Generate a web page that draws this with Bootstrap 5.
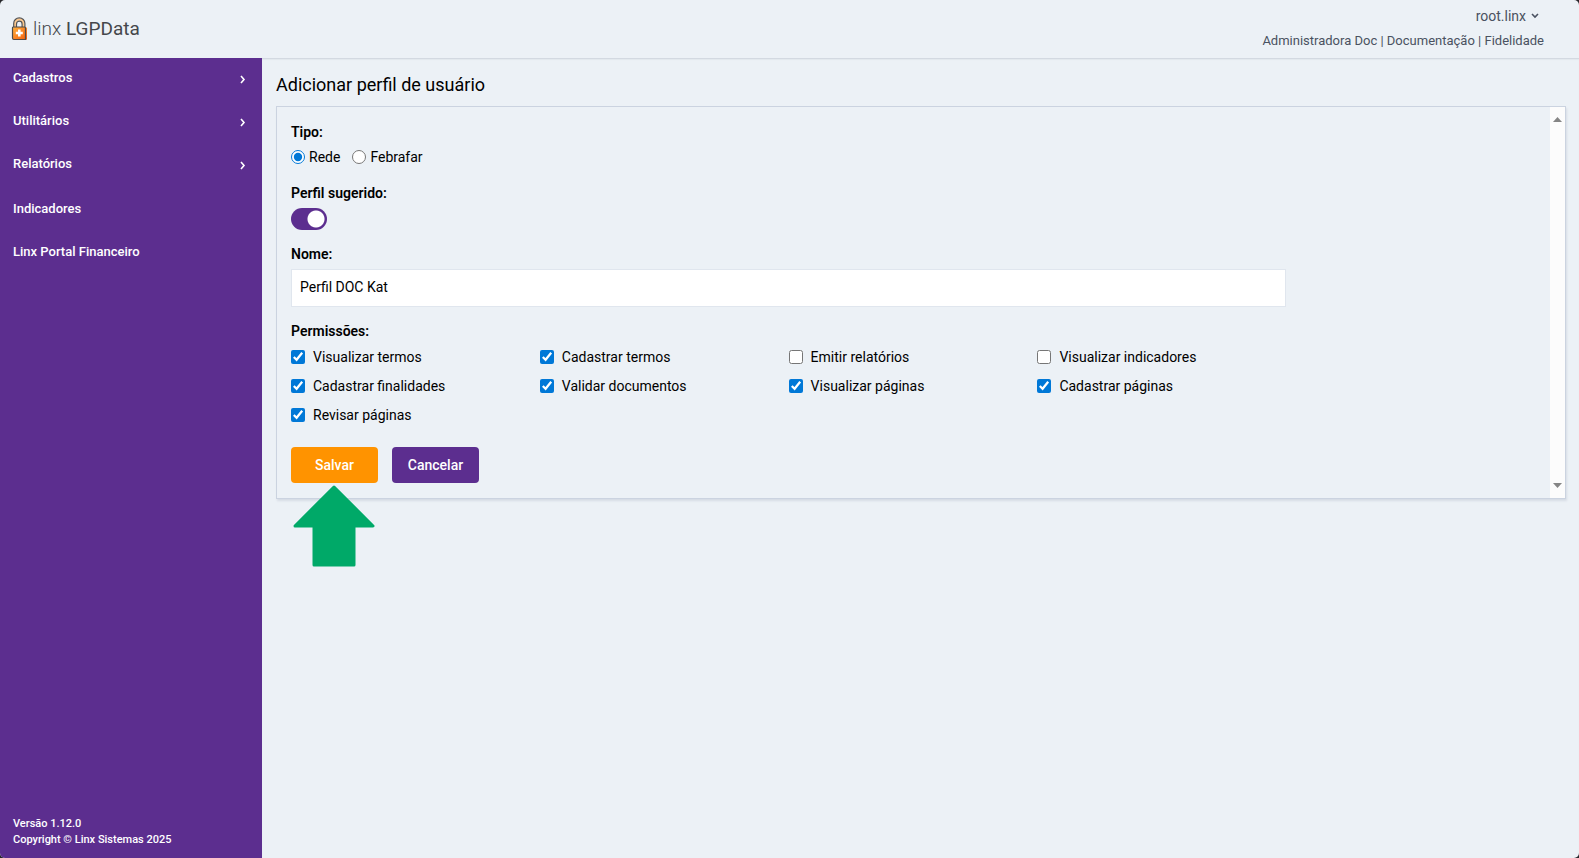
<!DOCTYPE html>
<html lang="pt-BR">
<head>
<meta charset="utf-8">
<meta name="viewport" content="width=device-width, initial-scale=1">
<title>Linx LGPData - Perfil de usuário</title>
<link href="https://cdn.jsdelivr.net/npm/bootstrap@5.3.0/dist/css/bootstrap.min.css" rel="stylesheet">
<style>
  :root { --purple: #5c2e8f; --surface: #ecf1f6; --orange: #ff9300; --line: #cbd3e0; }
  body { background: #26262a; color: #000; font-family: Roboto, "Liberation Sans", sans-serif; font-size: 14px; line-height: 20px; }
  a { color: inherit; text-decoration: none; }
  .app { background: var(--surface); border-radius: 5px; overflow: hidden; }
  .topbar { height: 58px; padding: 0 35px 0 11px; color: #4a5261; }
  .brand { color: #45474b; font-size: 19px; gap: 5px; }
  .brand .thin { font-weight: 300; }
  .account { padding-top: 6px; }
  .user-btn { font-size: 14px; line-height: 20px; padding: 0 5px 0 0; color: inherit; gap: 5px; }
  .unit-links { font-size: 13px; line-height: 18px; margin-top: 6px; }
  .sidebar { width: 262px; background: var(--purple); color: #fff; font-size: 13px; font-weight: 500; }
  .sidebar .nav-item a { height: 43px; padding: 11px 16px 0 13px; line-height: 18px; }
  .sidebar .nav-item svg { margin-top: 6px; }
  .sidebar .first-plain { margin-top: 2px; }
  .sidebar footer { font-size: 11px; line-height: 16px; padding: 0 13px 10px; }
  .content { padding: 14px 13px 0 14px; border-top: 1px solid #d3d9e1; box-shadow: inset 0 1px 1px #e3e8ee; }
  .page-title { font-size: 18px; line-height: 24px; margin-bottom: 9px; }
  .panel { border: 1px solid var(--line); box-shadow: 1px 2px 2px #d6dce5; }
  .panel form { padding: 15px 15px 15px 14px; }
  .track { width: 15px; background: #fcfcfc; padding: 10px 0; }
  .caption { font-size: 14px; line-height: 20px; font-weight: 600; margin: 0; float: none; }
  .tipo { margin-top: 5px; gap: 12px; }
  .pick { width: 14px; height: 14px; margin: 0; accent-color: #0078d7; flex: none; }
  .switcher { width: 36px; height: 22px; margin: 5px 0 0; appearance: none; display: block; border-radius: 11px; background: radial-gradient(circle at 25px 11px, #fff 8px, var(--purple) 9px); }
  .switcher:not(:checked) { background: radial-gradient(circle at 11px 11px, #fff 8px, #9aa0aa 9px); }
  .name-group { margin: 14px 0; }
  .name-box { width: 80%; height: 38px; border: 1px solid #e0e6ee; border-radius: 0; padding: 0 8px 2px; font-size: 14px; color: #000; margin-top: 5px; }
  .perms { padding-top: 1px; }
  .perm { width: 20%; height: 29px; }
  .actions { margin-top: 18px; gap: 14px; }
  .action { width: 87px; height: 36px; padding: 0; font-size: 14px; font-weight: 500; border: 0; border-radius: 4px; color: #fff; }
  .save { background: var(--orange); }
  .cancel { background: var(--purple); }
  .pointer { position: absolute; top: 100%; left: 2px; margin-top: 2px; pointer-events: none; }
</style>
</head>
<body>
<div class="app d-flex flex-column min-vh-100">
  <header class="topbar d-flex justify-content-between">
    <a href="#" class="brand d-flex align-items-center">
      <svg width="17" height="24" viewBox="0 0 17 24" aria-hidden="true">
        <defs><linearGradient id="lock" x1="0" y1="0" x2="1" y2="1"><stop offset="0" stop-color="#ffb13c"/><stop offset="1" stop-color="#f45a0c"/></linearGradient></defs>
        <path d="M4.200 10V6.500a4.100 4.100 0 0 1 8.200 0V10" fill="none" stroke="#fbc78c" stroke-width="2.400"/>
        <path d="M2.700 10V6.500a5.600 5.600 0 0 1 11.200 0V10M5.500 10V7a2.800 2.800 0 0 1 5.600 0V10" fill="none" stroke="#555453" stroke-width="1.200"/>
        <rect x="2" y="10" width="14" height="13" rx="1.500" fill="url(#lock)"/>
        <path d="M1.500 11V21a1.500 1.500 0 0 0 1.500 1.500H14.500V11a1 1 0 0 0-1-1H2.500a1 1 0 0 0-1 1Z" fill="none" stroke="#4e4b49" stroke-width="1.200"/>
        <path d="M8.300 12.500v7M4.800 16h7" stroke="#fff" stroke-width="2.600"/>
      </svg>
      <span><span class="thin">linx</span> LGPData</span>
    </a>
    <div class="account d-flex flex-column align-items-end">
      <button type="button" class="btn border-0 user-btn d-flex align-items-center">root.linx
        <svg width="8" height="6" viewBox="0 0 8 6" aria-hidden="true"><path d="M1 1l3 3 3-3" fill="none" stroke="currentColor" stroke-width="1.600"/></svg>
      </button>
      <a href="#" class="unit-links">Administradora Doc | Documentação | Fidelidade</a>
    </div>
  </header>
  <div class="d-flex flex-grow-1">
    <aside class="sidebar d-flex flex-column justify-content-between flex-shrink-0">
      <nav>
        <ul class="nav flex-column flex-nowrap">
          <li class="nav-item"><a href="#" class="d-flex justify-content-between align-items-start">Cadastros <svg width="6" height="9" viewBox="0 0 6 9" aria-hidden="true"><path d="M1 1l3 3.500L1 8" fill="none" stroke="#fff" stroke-width="1.600"/></svg></a></li>
          <li class="nav-item"><a href="#" class="d-flex justify-content-between align-items-start">Utilitários <svg width="6" height="9" viewBox="0 0 6 9" aria-hidden="true"><path d="M1 1l3 3.500L1 8" fill="none" stroke="#fff" stroke-width="1.600"/></svg></a></li>
          <li class="nav-item"><a href="#" class="d-flex justify-content-between align-items-start">Relatórios <svg width="6" height="9" viewBox="0 0 6 9" aria-hidden="true"><path d="M1 1l3 3.500L1 8" fill="none" stroke="#fff" stroke-width="1.600"/></svg></a></li>
          <li class="nav-item first-plain"><a href="#" class="d-block">Indicadores</a></li>
          <li class="nav-item"><a href="#" class="d-block">Linx Portal Financeiro</a></li>
        </ul>
      </nav>
      <footer>Versão 1.12.0<br>Copyright © Linx Sistemas 2025</footer>
    </aside>
    <main class="content flex-grow-1">
      <h1 class="page-title fw-normal">Adicionar perfil de usuário</h1>
      <section class="panel d-flex">
        <form class="flex-grow-1">
          <fieldset>
            <legend class="caption">Tipo:</legend>
            <div class="tipo d-flex">
              <div class="d-flex align-items-center"><input class="pick me-1" type="radio" name="tipo" id="rede" checked><label for="rede">Rede</label></div>
              <div class="d-flex align-items-center"><input class="pick me-1" type="radio" name="tipo" id="febrafar"><label for="febrafar">Febrafar</label></div>
            </div>
          </fieldset>
          <div class="mt-3">
            <label class="caption d-block" for="sugerido">Perfil sugerido:</label>
            <input class="switcher" type="checkbox" role="switch" id="sugerido" checked>
          </div>
          <div class="name-group">
            <label class="caption d-block" for="nome">Nome:</label>
            <input class="form-control name-box" type="text" id="nome" value="Perfil DOC Kat">
          </div>
          <fieldset>
            <legend class="caption">Permissões:</legend>
            <div class="perms d-flex flex-wrap">
              <div class="perm d-flex align-items-center"><input class="pick me-2" type="checkbox" id="p1" checked><label for="p1">Visualizar termos</label></div>
              <div class="perm d-flex align-items-center"><input class="pick me-2" type="checkbox" id="p2" checked><label for="p2">Cadastrar termos</label></div>
              <div class="perm d-flex align-items-center"><input class="pick me-2" type="checkbox" id="p3"><label for="p3">Emitir relatórios</label></div>
              <div class="perm d-flex align-items-center"><input class="pick me-2" type="checkbox" id="p4"><label for="p4">Visualizar indicadores</label></div>
              <div class="w-100"></div>
              <div class="perm d-flex align-items-center"><input class="pick me-2" type="checkbox" id="p5" checked><label for="p5">Cadastrar finalidades</label></div>
              <div class="perm d-flex align-items-center"><input class="pick me-2" type="checkbox" id="p6" checked><label for="p6">Validar documentos</label></div>
              <div class="perm d-flex align-items-center"><input class="pick me-2" type="checkbox" id="p7" checked><label for="p7">Visualizar páginas</label></div>
              <div class="perm d-flex align-items-center"><input class="pick me-2" type="checkbox" id="p8" checked><label for="p8">Cadastrar páginas</label></div>
              <div class="w-100"></div>
              <div class="perm d-flex align-items-center"><input class="pick me-2" type="checkbox" id="p9" checked><label for="p9">Revisar páginas</label></div>
            </div>
          </fieldset>
          <div class="actions d-flex">
            <div class="position-relative">
              <button type="submit" class="btn action save">Salvar</button>
              <svg class="pointer" width="82" height="82" viewBox="0 0 82 82" aria-hidden="true"><path d="M41 2L80 41H61V80H21V41H2Z" fill="#00a968" stroke="#00a968" stroke-width="3" stroke-linejoin="round"/></svg>
            </div>
            <button type="button" class="btn action cancel">Cancelar</button>
          </div>
        </form>
        <div class="track d-flex flex-column justify-content-between align-items-center" aria-hidden="true">
          <svg width="9" height="5" viewBox="0 0 9 5"><path d="M0 5L4.500 0 9 5Z" fill="#858585"/></svg>
          <svg width="9" height="5" viewBox="0 0 9 5"><path d="M0 0L4.500 5 9 0Z" fill="#858585"/></svg>
        </div>
      </section>
    </main>
  </div>
</div>
<script src="https://cdn.jsdelivr.net/npm/bootstrap@5.3.0/dist/js/bootstrap.bundle.min.js"></script>
</body>
</html>
